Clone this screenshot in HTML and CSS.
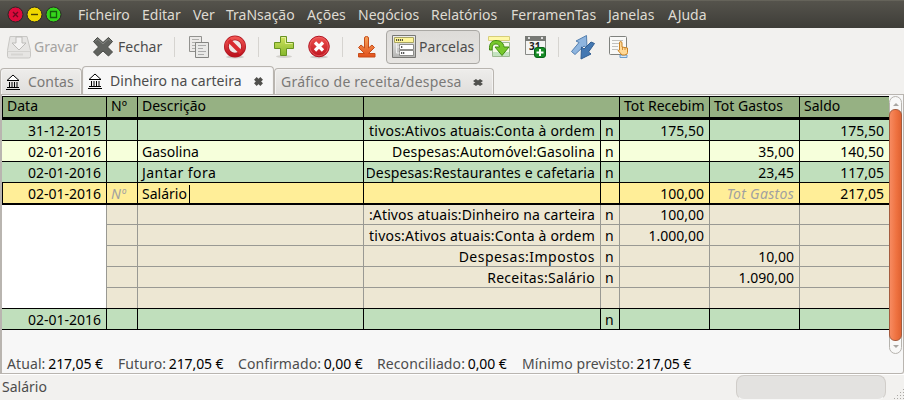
FILE: index.html
```html
<!DOCTYPE html>
<html lang="pt">
<head>
<meta charset="utf-8">
<title>Dinheiro na carteira</title>
<link rel="stylesheet" href="styles.css">
</head>
<body>
<svg class="defs" width="0" height="0">
  <defs>
    <linearGradient id="red" x1="0" y1="0" x2="0" y2="1"><stop offset="0" stop-color="#ef5350"/><stop offset="1" stop-color="#be141f"/></linearGradient>
    <linearGradient id="green" x1="0" y1="0" x2="0" y2="1"><stop offset="0" stop-color="#d2e45e"/><stop offset="1" stop-color="#85b72c"/></linearGradient>
    <linearGradient id="orange" x1="0" y1="0" x2="0" y2="1"><stop offset="0" stop-color="#f6a45c"/><stop offset="1" stop-color="#e2501c"/></linearGradient>
    <linearGradient id="metal" x1="0" y1="0" x2="0" y2="1"><stop offset="0" stop-color="#eeeeec"/><stop offset="1" stop-color="#b4b4b2"/></linearGradient>
    <symbol id="bank" viewBox="0 0 14 16">
      <path d="M7 1 1 6.500h12z" fill="#fff" stroke="#000"/>
      <path d="M2 6.500h10M3.500 8v5M6 8v5M8.500 8v5M11 8v5M1 13.500h12M0 15.500h14" fill="none" stroke="#000"/>
    </symbol>
    <symbol id="close" viewBox="0 0 8 8" preserveAspectRatio="none"><path d="M1.200 1.200 6.800 6.800M6.800 1.200 1.200 6.800" stroke="#50504d" stroke-width="3.300"/></symbol>
  </defs>
</svg>
<div class="window">
  <header class="menubar">
    <svg class="buttons" width="64" height="28" viewBox="0 0 64 28">
      <circle cx="15.500" cy="14.500" r="7.500" fill="#dc0a3c" stroke="#292824"/><path d="m13 12 5 5m0-5-5 5" stroke="#6d0820" stroke-width="1.300"/>
      <circle cx="34.500" cy="14.500" r="7.500" fill="#f0d800" stroke="#292824"/><path d="M31 14.500h7" stroke="#4b4200" stroke-width="1.400"/>
      <circle cx="53.500" cy="14.500" r="7.500" fill="#35d51c" stroke="#292824"/><path d="M50.500 11.500h6v6h-6z" fill="none" stroke="#145d0c" stroke-width="1.300"/>
    </svg>
    <nav class="menus"><span>Ficheiro</span><span>Editar</span><span>Ver</span><span>TraNsação</span><span>Ações</span><span>Negócios</span><span>Relatórios</span><span>FerramenTas</span><span>Janelas</span><span>AJuda</span></nav>
  </header>

  <div class="toolbar">
    <div class="tool save"><svg width="26" height="26" viewBox="0 0 26 26">
      <path d="M4 2.500h17l3.500 14v6q0 1.500-2 1.500h-19q-2 0-2-1.500v-6z" fill="#e6e5e3" stroke="#c8c7c4"/><path d="M1.500 17.500h23" stroke="#d3d2cf"/><path d="M5 20.500h12" stroke="#d6d5d2" stroke-width="2"/>
      <path d="M10 3v6H6l7 7 7-7h-4V3z" fill="#f4f3f2" stroke="#bdbcb9"/></svg><span>Gravar</span></div>
    <div class="tool shut"><svg width="22" height="22" viewBox="0 0 22 22"><path d="m1.500 5.500 4-4 5.500 5 5.500-5 4 4-5 5.500 5 5-4 4-5.500-5-5.500 5-4-4 5-5z" fill="#60625e" stroke="#484a46"/><path d="m3 5.500 2.500-2.500 5.500 5 5.500-5L19 5.500" fill="none" stroke="#858783"/></svg><span>Fechar</span></div>
    <i class="rule r1"></i>
    <svg class="copy" width="22" height="24" viewBox="0 0 22 24"><path d="M1.500 1.500h12v15h-12z" fill="#eceae8" stroke="#92928f"/><path d="M4 4.500h7M4 7.500h7M4 10.500h3M4 13.500h3" stroke="#b0b0ad"/><path d="M7.500 7.500h13v15h-13z" fill="#e9e9e7" stroke="#858582"/><path d="M10 10.500h8M10 13.500h5M10 16.500h8M10 19.500h6" stroke="#aaa"/></svg>
    <svg class="ban" width="24" height="24" viewBox="0 0 24 24"><ellipse cx="12" cy="22" rx="9" ry="1.500" fill="#cfcdca"/><circle cx="12" cy="11.500" r="8.600" fill="#efe9e7" stroke="#b01822" stroke-width="4.800"/><circle cx="12" cy="11.500" r="8.600" fill="none" stroke="url(#red)" stroke-width="3.400"/><path d="m6 5.500 12 12" stroke="#d92b30" stroke-width="4"/></svg>
    <i class="rule r2"></i>
    <svg class="add" width="22" height="24" viewBox="0 0 22 24"><ellipse cx="11" cy="21.500" rx="8" ry="1.500" fill="#d3d1cd"/><path d="M7.500 1.500h6v6h7v6h-7v7h-6v-7h-6v-6h6z" fill="url(#green)" stroke="#689322"/><path d="M8.500 2.500h4v6h7" fill="none" stroke="#e4ef9b"/></svg>
    <svg class="del" width="24" height="24" viewBox="0 0 24 24"><ellipse cx="12" cy="22" rx="9" ry="1.500" fill="#cfcdca"/><circle cx="12" cy="11.500" r="10.300" fill="url(#red)" stroke="#b11320"/><circle cx="12" cy="11.500" r="9.200" fill="none" stroke="#f27070" opacity=".6"/><path d="m8 7.500 8 8m0-8-8 8" stroke="#fff" stroke-width="3.200"/></svg>
    <i class="rule r3"></i>
    <svg class="down" width="20" height="24" viewBox="0 0 20 24"><path d="M7.500 3q0-1.500 2-1.500t2 1.500v10l3.500-3 2.500 2.500-6 6h6.500v3.500H1.500v-3.500H7.500l-6-6L4 10l3.500 3z" fill="url(#orange)" stroke="#c64c19"/></svg>
    <div class="toggle"><svg width="24" height="24" viewBox="0 0 24 24"><path d="M.5.500h23v22H.5z" fill="url(#metal)" stroke="#777774"/><path d="M2.500 2.500h19v5h-19z" fill="#fff69b" stroke="#aaa663"/><path d="M4 5h7" stroke="#222" stroke-width="1.500" stroke-dasharray="1.200 .8"/><path d="M7.500 9.500h14v5h-14zM7.500 15.500h14v5h-14z" fill="#fff" stroke="#8d8d8a"/><path d="M9 12h2M9 18h4" stroke="#222" stroke-width="1.500" stroke-dasharray="1.300 .7"/><path d="M4.500 8v10h3m-3-6h3" fill="none" stroke="#eee"/></svg><span>Parcelas</span></div>
    <svg class="jump" width="24" height="24" viewBox="0 0 24 24"><path d="M.5 1.500h21v4H.5z" fill="#fff9a7" stroke="#d7ce7a"/><path d="M4.500 7.500h17v14h-17z" fill="#f6fae8" stroke="#9db990"/><path d="M5 17h16v4H5z" fill="#c4e3c0"/><path d="M1.500 15C1 8 4 5.500 8 5.500s7.500 2 8 6.500h5L14 20.500l-7-8.500h4.500c-.5-2-1.500-3-3.500-3-3 0-4 2-4 6z" fill="#77c82b" stroke="#428b12"/></svg>
    <svg class="cal" width="24" height="24" viewBox="0 0 24 24"><path d="M1.500 1.500h20v18h-20z" fill="#f4f4f2" stroke="#888a86"/><path d="M1 1h21v5H1z" fill="#777975"/><path d="M4 3h2M17 3h2" stroke="#ddd" stroke-width="2"/><text x="5" y="14.500" class="day">31</text><rect x="10.500" y="12.500" width="11" height="10" rx="2.500" fill="#168b25" stroke="#086317"/><path d="M16 14v7m-3.500-3.500h7" stroke="#fff" stroke-width="2"/></svg>
    <i class="rule r4"></i>
    <svg class="sync" width="26" height="26" viewBox="0 0 26 26"><path d="m1.500 17.500 7.500-9-3-1.500L16.500 1.500 17 14l-3-2-9 8.500z" fill="#8eb5df" stroke="#547fae"/><path d="M24.500 9.500 18.500 18l2.500 2-10 5 .5-12 2.500 2 7-7z" fill="#4478b2" stroke="#315e92"/></svg>
    <svg class="hand" width="22" height="24" viewBox="0 0 22 24"><rect x="1.500" y="1.500" width="17" height="18" rx="1" fill="#f9f9f7" stroke="#80827e"/><path d="M4 5.500h11M4 8.500h7M4 11.500h6M4 14.500h6" stroke="#c1c1be"/><path d="M12 20h7v2.500h-7z" fill="#d5e8fa" stroke="#6b9ccc"/><path d="M11.500 15V8q0-1.500 1.200-1.500T14 8v4l5.500 1v4.500q0 2.500-3 2.500h-2.500l-4-4.500z" fill="#ffd997" stroke="#c98224"/><path d="M14.500 12v3m2.500-2.500V15" stroke="#c98224" stroke-width=".8"/></svg>
  </div>

  <div class="tabs">
    <div class="tab t1"><svg width="14" height="16"><use href="#bank"/></svg><span>Contas</span></div>
    <div class="tab active t2"><svg width="14" height="16"><use href="#bank"/></svg><span>Dinheiro na carteira</span><svg class="x" width="9" height="9"><use href="#close"/></svg></div>
    <div class="tab t3"><span>Gráfico de receita/despesa</span><svg class="x" width="10" height="7"><use href="#close"/></svg></div>
  </div>

  <main class="page">
    <div class="ledger">
      <div class="register">
        <div class="row head"><b>Data</b><b>Nº</b><b>Descrição</b><b class="wide"></b><b>Tot Recebim</b><b>Tot Gastos</b><b>Saldo</b></div>
        <div class="row green"><b>31-12-2015</b><b></b><b></b><b><span class="a1">tivos:Ativos atuais:Conta à ordem</span></b><b>n</b><b>175,50</b><b></b><b>175,50</b></div>
        <div class="row cream"><b>02-01-2016</b><b></b><b>Gasolina</b><b><span class="a2">Despesas:Automóvel:Gasolina</span></b><b>n</b><b></b><b>35,00</b><b>140,50</b></div>
        <div class="row green"><b>02-01-2016</b><b></b><b class="loose">Jantar fora</b><b><span class="a3">Despesas:Restaurantes e cafetaria</span></b><b>n</b><b></b><b>23,45</b><b>117,05</b></div>
        <div class="row current"><b>02-01-2016</b><b class="hint">Nº</b><b>Salário<i class="caret"></i></b><b></b><b></b><b>100,00</b><b class="hint">Tot Gastos</b><b>217,05</b></div>
        <div class="row split first"><b></b><b></b><b></b><b><span class="a4">:Ativos atuais:Dinheiro na carteira</span></b><b>n</b><b>100,00</b><b></b><b></b></div>
        <div class="row split"><b></b><b></b><b></b><b><span class="a1">tivos:Ativos atuais:Conta à ordem</span></b><b>n</b><b>1.000,00</b><b></b><b></b></div>
        <div class="row split"><b></b><b></b><b></b><b><span class="a5">Despesas:Impostos</span></b><b>n</b><b></b><b>10,00</b><b></b></div>
        <div class="row split"><b></b><b></b><b></b><b><span class="a6">Receitas:Salário</span></b><b>n</b><b></b><b>1.090,00</b><b></b></div>
        <div class="row split last"><b></b><b></b><b></b><b></b><b></b><b></b><b></b><b></b></div>
        <div class="row green"><b>02-01-2016</b><b></b><b></b><b></b><b>n</b><b></b><b></b><b></b></div>
      </div>
      <div class="scroll"><i class="up"></i><div class="thumb"></div><i class="dn"></i></div>
    </div>
    <div class="summary"><span>Atual: <em>217,05 €</em></span><span>Futuro: <em>217,05 €</em></span><span>Confirmado: <em>0,00 €</em></span><span>Reconciliado: <em>0,00 €</em></span><span>Mínimo previsto: <em>217,05 €</em></span></div>
  </main>
  <footer class="status"><span>Salário</span><div class="progress"></div><svg class="grip" width="12" height="12" viewBox="0 0 12 12"><path d="M11.500 1v11M8.500 4v8M5.500 7v5M2.500 10v2" stroke="#aaa8a4" stroke-dasharray="1 2"/></svg></footer>
</div>
</body>
</html>
```
FILE: styles.css
```css
* { box-sizing: border-box; }
body { margin: 0; background: #f2f1ef; font: 14px/20px "Noto Sans", sans-serif; color: #4c4c4c; overflow: hidden; }
svg { display: block; flex: none; }
.defs { position: absolute; }
.window { width: 904px; height: 400px; display: flex; flex-direction: column; }

.menubar { height: 28px; flex: none; display: flex; background: linear-gradient(#55534c, #3e3d38); border-top: 1px solid #65635a; }
.buttons { margin-top: -1px; }
.menus { display: grid; grid-template-columns: 64px 51px 33px 81px 51px 73px 80px 97px 60px 45px; margin-left: 14px; padding-top: 4px; color: #dfdbd2; white-space: nowrap; }

.toolbar { height: 38px; flex: none; display: flex; align-items: center; background: #f2f1ef; }
.tool { display: flex; align-items: center; }
.save { margin-left: 6px; width: 86px; gap: 2px; color: #a4a3a1; }
.shut { width: 82px; gap: 4px; }
.rule { width: 1px; height: 20px; background: #d6d4d0; }
.r1 { margin-right: 13px; }
.copy { margin-right: 13px; }
.ban { margin-right: 11px; }
.r2 { margin-right: 14px; }
.add { margin-right: 12px; }
.del { margin-right: 11px; }
.r3 { margin-right: 14px; }
.down { margin-right: 9px; }
.toggle { width: 94px; height: 34px; display: flex; align-items: center; gap: 3px; padding-left: 5px; border: 1px solid #aaa8a4; border-radius: 4px; background: linear-gradient(#dddbd8, #e7e5e2); letter-spacing: .1px; white-space: nowrap; }
.jump { margin-left: 8px; }
.cal { margin-left: 12px; }
.day { font: bold 10px "Noto Sans", sans-serif; fill: #222; }
.r4 { margin-left: 10px; }
.sync { margin-left: 11px; }
.hand { margin-left: 12px; }

.tabs { height: 29px; flex: none; display: flex; align-items: flex-end; }
.tab { height: 27px; display: flex; align-items: center; border: 1px solid #b9b5b0; border-bottom: 0; border-radius: 4px 4px 0 0; background: linear-gradient(#eeedeb, #dfdddb); box-shadow: inset 0 0 0 1px #f3f2f1; color: #7a7977; white-space: nowrap; }
.active { height: 29px; background: #f7f7f7; color: #4c4c4c; }
.t1 { width: 82px; padding-left: 5px; gap: 8px; }
.t2 { width: 192px; padding-left: 5px; }
.t2 span { margin-left: 8px; width: 144px; letter-spacing: .05px; }
.t3 { width: 220px; padding-left: 6px; }
.t3 span { width: 192px; letter-spacing: .22px; }

.page { height: 280px; flex: none; background: #f7f7f7; border: 1px solid #b9b5b0; border-left-width: 2px; margin-top: -1px; padding-top: 1px; border-radius: 0 0 3px 0; }
.ledger { display: flex; height: 258px; }
.register { width: 887px; height: 234px; color: #000; }
.row { display: grid; grid-template-columns: 105px 31px 226px 237px 19px 90px 90px 89px; height: 21px; border-bottom: 1px solid #000; white-space: nowrap; }
.row b { font-weight: normal; overflow: hidden; border-right: 1px solid #000; height: 100%; padding: 0 4px; line-height: 22px; }
.row b:first-child, .row b:nth-child(n+6) { text-align: right; padding-right: 5px; }
.row b:last-child { border-right: 0; }
.row b:nth-child(4) { display: flex; justify-content: flex-end; padding: 0; }
.row b:nth-child(4) span { margin: 0 5px 0 3px; width: 228px; overflow: hidden; display: flex; justify-content: flex-end; }
.head { height: 24px; border-top: 1px solid #000; border-bottom-width: 3px; background: #96b183; }
.head b:nth-child(n) { text-align: left; line-height: 18px; padding-right: 2px; }
.head b:first-child { border-left: 1px solid #000; }
.head .wide { grid-column: span 2; }
.green { background: #c0dfbc; }
.cream { background: #f6ffdb; }
.current { height: 22px; border-bottom-width: 2px; background: #ffee98; }
.current b:first-child { border-left: 1px solid #000; }
.row .hint { color: #a1a1a1; font-style: italic; }
.current .hint:nth-child(7) { letter-spacing: .3px; }
.loose { letter-spacing: .45px; }
.caret { display: inline-block; width: 1px; height: 18px; margin-left: 2px; background: #000; vertical-align: -4px; }
.split { background: #ede7d3; border-bottom-color: #999993; }
.split b { border-color: #999993; }
.split b:first-child { background: #fff; height: calc(100% + 1px); }
.first { height: 20px; }
.row.first b { line-height: 20px; }
.last { border-bottom-color: #000; }
.row.last b:first-child { height: 100%; }
.a1 { letter-spacing: .2px; }
.a2 { letter-spacing: .18px; }
.a3 { letter-spacing: .12px; }
.a4 { letter-spacing: .13px; }
.a5 { letter-spacing: .48px; }
.a6 { letter-spacing: .3px; }

.scroll { width: 13px; height: 258px; border: 1px solid #b6b3ae; border-radius: 7px; background: #f8f8f7; display: flex; flex-direction: column; align-items: center; }
.thumb { width: 13px; flex: 1; border: 1px solid #a45b3d; border-radius: 6px; background: linear-gradient(90deg, #f78a60, #ee713f 60%, #e06333); }
.up, .dn { width: 0; height: 0; border: 3px solid transparent; }
.up { border-top: 0; border-bottom-color: #a8a6a2; margin: 6px 0 3px; }
.dn { border-bottom: 0; border-top-color: #a8a6a2; margin: 4px 0 5px; }
.summary { display: grid; grid-template-columns: 111px 120px 139px 145px 180px; padding: 0 0 0 5px; line-height: 19px; white-space: nowrap; letter-spacing: .1px; }
.summary em { font-style: normal; color: #000; margin-left: -1px; letter-spacing: -.1px; }
.status { height: 26px; flex: none; display: flex; align-items: flex-start; padding-left: 2px; border-top: 1px solid #fff; }
.status span { width: 734px; line-height: 24px; }
.progress { width: 150px; height: 25px; border: 1px solid #d0cdc9; border-radius: 8px; background: #e3e2e0; border-bottom-color: #f8f8f7; }
.grip { margin: 13px 0 0 6px; }
```
